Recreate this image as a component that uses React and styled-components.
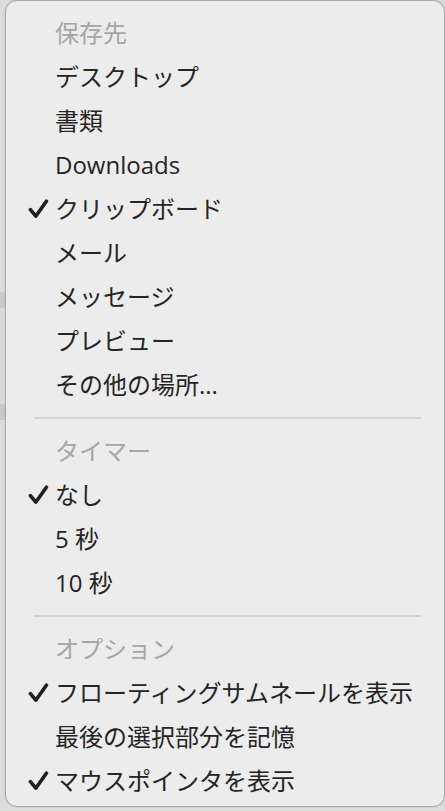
import styled, { createGlobalStyle } from 'styled-components';

const GlobalStyle = createGlobalStyle`
  html, body {
    margin: 0;
    padding: 0;
    background: #dcdcdc;
  }
  body {
    font-family: "Open Sans", "Noto Sans CJK JP", sans-serif;
  }
`;

// Menu data
const sections = [
  {
    title: '保存先',
    items: [
      { label: 'デスクトップ' },
      { label: '書類' },
      { label: 'Downloads' },
      { label: 'クリップボード', checked: true },
      { label: 'メール' },
      { label: 'メッセージ' },
      { label: 'プレビュー' },
      { label: 'その他の場所...' },
    ],
  },
  {
    title: 'タイマー',
    items: [
      { label: 'なし', checked: true },
      { label: '5 秒' },
      { label: '10 秒' },
    ],
  },
  {
    title: 'オプション',
    items: [
      { label: 'フローティングサムネールを表示', checked: true },
      { label: '最後の選択部分を記憶' },
      { label: 'マウスポインタを表示', checked: true },
    ],
  },
];

const Page = styled.div`
  height: 811px;
  padding-left: 5px;
  overflow: hidden;
  background: linear-gradient(
    to bottom,
    #dcdcdc 0,
    #dcdcdc 292px,
    #c9c9c9 292px,
    #c9c9c9 308px,
    #dadada 308px,
    #dadada 404px,
    #c8c8c8 404px,
    #c8c8c8 420px,
    #dcdcdc 420px
  );
`;

const Menu = styled.div`
  box-sizing: border-box;
  width: 440px;
  height: 807px;
  padding: 10px 0 4px;
  background: #ececec;
  border: 1px solid #a9a9a9;
  border-radius: 12px;
  box-shadow: 0 0 2px rgba(0, 0, 0, 0.15);
  display: flex;
  flex-direction: column;
`;

const Row = styled.div`
  height: 44px;
  display: flex;
  align-items: center;
  font-size: 24px;
  line-height: 30px;
  color: ${(p) => (p.$header ? '#a6a6a6' : '#242424')};
  white-space: nowrap;
`;

const CheckCell = styled.div`
  width: 49px;
  display: flex;
  justify-content: flex-end;
  padding-right: 6px;
  box-sizing: border-box;
`;

const Label = styled.span`
  letter-spacing: 0;
`;

const Separator = styled.div`
  height: 22px;
  display: flex;
  align-items: center;
  padding: 0 23px 0 28px;

  &::after {
    content: '';
    flex: 1;
    height: 2px;
    background: #d3d3d3;
  }
`;

const Check = () => (
  <svg width="21" height="20" viewBox="0 0 21 20">
    <path
      d="M2.4 10.6 L7.8 17.2 L18.4 2.2"
      fill="none"
      stroke="#1f1f1f"
      strokeWidth="3.6"
      strokeLinecap="round"
      strokeLinejoin="round"
    />
  </svg>
);

const MenuRow = ({ label, checked, header }) => (
  <Row $header={header}>
    <CheckCell>{checked && <Check />}</CheckCell>
    <Label>{label}</Label>
  </Row>
);

const App = () => (
  <Page>
    <GlobalStyle />
    <Menu>
      {sections.map((section, i) => (
        <div key={section.title}>
          {i > 0 && <Separator />}
          <MenuRow label={section.title} header />
          {section.items.map((item) => (
            <MenuRow key={item.label} {...item} />
          ))}
        </div>
      ))}
    </Menu>
  </Page>
);

export default App;
